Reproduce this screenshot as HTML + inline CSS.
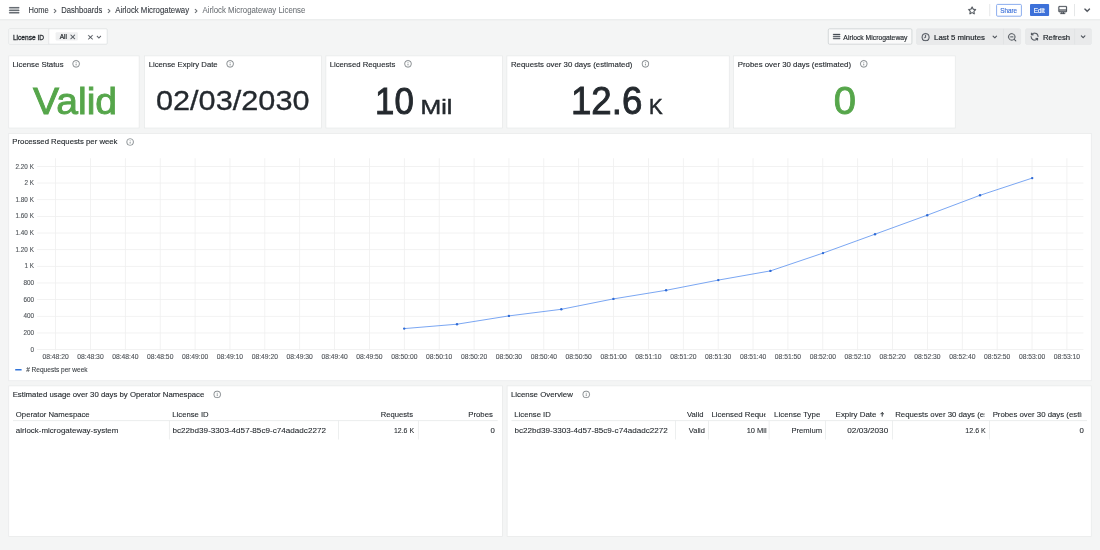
<!DOCTYPE html>
<html><head><meta charset="utf-8"><title>Airlock Microgateway License - Dashboards - Grafana</title>
<style>
html,body{margin:0;padding:0;width:1100px;height:550px;overflow:hidden;background:#f4f5f5;}
svg{position:absolute;left:0;top:0;display:block;will-change:transform;}
text{font-family:"Liberation Sans",sans-serif;white-space:pre;}
</style></head><body>
<svg width="1100" height="550" viewBox="0 0 1100 550">
<rect x="0" y="0" width="1100" height="550" fill="#f4f5f5"/>
<rect x="0" y="0" width="1100" height="19.6" fill="#ffffff"/>
<rect x="0" y="19.3" width="1100" height="1" fill="#e6e8e9"/>
<path transform="translate(8.080 4.300) scale(0.51 0.5)" d="M3,8H21a1,1,0,0,0,0-2H3A1,1,0,0,0,3,8Zm18,8H3a1,1,0,0,0,0,2H21a1,1,0,0,0,0-2Zm0-5H3a1,1,0,0,0,0,2H21a1,1,0,0,0,0-2Z" fill="#464c54" stroke="#464c54" stroke-width="0.5"/>
<path transform="translate(50.300 6.200) scale(0.4 0.4)" d="M14.83,11.29,10.59,7.05a1,1,0,0,0-1.42,0,1,1,0,0,0,0,1.41L12.71,12,9.17,15.54a1,1,0,0,0,0,1.41,1,1,0,0,0,.71.3,1,1,0,0,0,.71-.3l4.24-4.24A1,1,0,0,0,14.83,11.29Z" fill="#5d6267" stroke="#5d6267" stroke-width="0.5"/>
<path transform="translate(104.300 6.200) scale(0.4 0.4)" d="M14.83,11.29,10.59,7.05a1,1,0,0,0-1.42,0,1,1,0,0,0,0,1.41L12.71,12,9.17,15.54a1,1,0,0,0,0,1.41,1,1,0,0,0,.71.3,1,1,0,0,0,.71-.3l4.24-4.24A1,1,0,0,0,14.83,11.29Z" fill="#5d6267" stroke="#5d6267" stroke-width="0.5"/>
<path transform="translate(191.300 6.200) scale(0.4 0.4)" d="M14.83,11.29,10.59,7.05a1,1,0,0,0-1.42,0,1,1,0,0,0,0,1.41L12.71,12,9.17,15.54a1,1,0,0,0,0,1.41,1,1,0,0,0,.71.3,1,1,0,0,0,.71-.3l4.24-4.24A1,1,0,0,0,14.83,11.29Z" fill="#5d6267" stroke="#5d6267" stroke-width="0.5"/>
<path transform="translate(967.300 5.600) scale(0.4 0.4)" d="M22,9.67A1,1,0,0,0,21.14,9l-5.69-.83L12.9,3a1,1,0,0,0-1.8,0L8.55,8.16,2.86,9a1,1,0,0,0-.81.68,1,1,0,0,0,.25,1l4.13,4-1,5.68A1,1,0,0,0,6.9,21.44L12,18.77l5.1,2.67a.93.93,0,0,0,.46.12,1,1,0,0,0,.59-.19,1,1,0,0,0,.4-1l-1-5.68,4.130-4A1,1,0,0,0,22,9.67Zm-6.15,4a1,1,0,0,0-.29.88l.72,4.2-3.760-2a1.06,1.06,0,0,0-.94,0l-3.76,2,.72-4.2a1,1,0,0,0-.29-.88l-3-3,4.21-.61a1,1,0,0,0,.76-.55L12,5.7l1.88,3.82a1,1,0,0,0,.76.55l4.21.61Z" fill="#464c54" stroke="#464c54" stroke-width="0.5"/>
<rect x="989.4" y="4" width="0.8" height="12.2" fill="#dfe1e3"/>
<rect x="1074" y="4" width="0.8" height="12.2" fill="#dfe1e3"/>
<rect x="996.6" y="4.4" width="24.8" height="11.8" rx="1" fill="#ffffff" stroke="#6f98ea" stroke-width="0.8"/>
<rect x="1030" y="4.1" width="19.1" height="12" rx="1" fill="#3d71d9"/>
<path transform="translate(1057.540 4.600) scale(0.43 0.45)" d="M19,3H5A3,3,0,0,0,2,6v8a3,3,0,0,0,3,3H9v2H7a1,1,0,0,0,0,2H17a1,1,0,0,0,0-2H15V17h4a3,3,0,0,0,3-3V6A3,3,0,0,0,19,3ZM13,19H11V17h2Zm7-5a1,1,0,0,1-1,1H5a1,1,0,0,1-1-1V13H20Zm0-3H4V6A1,1,0,0,1,5,5H19a1,1,0,0,1,1,1Z" fill="#464c54" stroke="#464c54" stroke-width="0.5"/>
<path transform="translate(1080.960 3.960) scale(0.52 0.52)" d="M17,9.17a1,1,0,0,0-1.41,0L12,12.71,8.46,9.17a1,1,0,0,0-1.41,0,1,1,0,0,0,0,1.42l4.24,4.24a1,1,0,0,0,1.42,0L17,10.59A1,1,0,0,0,17,9.17Z" fill="#464c54" stroke="#464c54" stroke-width="0.8"/>
<rect x="8.9" y="28.8" width="98.3" height="15.4" rx="1" fill="#ffffff" stroke="#d9dcde" stroke-width="0.7"/>
<rect x="9.25" y="29.15" width="39.35" height="14.7" fill="#f4f5f5"/>
<rect x="48.5" y="28.8" width="0.7" height="15.4" fill="#d9dcde"/>
<rect x="55.6" y="32.3" width="22.3" height="8.3" rx="1" fill="#eff0f1"/>
<path transform="translate(68.310 32.510) scale(0.37 0.37)" d="M13.41,12l4.3-4.29a1,1,0,1,0-1.42-1.42L12,10.59,7.71,6.29A1,1,0,0,0,6.29,7.71L10.59,12l-4.3,4.29a1,1,0,0,0,0,1.420,1,1,0,0,0,1.42,0L12,13.41l4.29,4.3a1,1,0,0,0,1.42,0,1,1,0,0,0,0-1.42Z" fill="#464c54" stroke="#464c54" stroke-width="0.5"/>
<path transform="translate(86.010 32.810) scale(0.37 0.37)" d="M13.41,12l4.3-4.29a1,1,0,1,0-1.42-1.42L12,10.59,7.71,6.29A1,1,0,0,0,6.29,7.71L10.59,12l-4.3,4.29a1,1,0,0,0,0,1.420,1,1,0,0,0,1.42,0L12,13.41l4.29,4.3a1,1,0,0,0,1.42,0,1,1,0,0,0,0-1.42Z" fill="#464c54" stroke="#464c54" stroke-width="0.5"/>
<path transform="translate(94.100 32.300) scale(0.4 0.4)" d="M17,9.17a1,1,0,0,0-1.41,0L12,12.71,8.46,9.17a1,1,0,0,0-1.41,0,1,1,0,0,0,0,1.42l4.24,4.24a1,1,0,0,0,1.42,0L17,10.59A1,1,0,0,0,17,9.17Z" fill="#464c54" stroke="#464c54" stroke-width="0.5"/>
<rect x="828.3" y="28.8" width="83.6" height="15.4" rx="1.2" fill="#fafafa" stroke="#ccd0d2" stroke-width="0.8"/>
<path transform="translate(832.280 31.560) scale(0.36 0.42)" d="M3,8H21a1,1,0,0,0,0-2H3A1,1,0,0,0,3,8Zm18,8H3a1,1,0,0,0,0,2H21a1,1,0,0,0,0-2Zm0-5H3a1,1,0,0,0,0,2H21a1,1,0,0,0,0-2Z" fill="#464c54" stroke="#464c54" stroke-width="0.9"/>
<rect x="916.6" y="28.8" width="104" height="15.6" rx="1.2" fill="#e9eaeb" stroke="#e1e3e4" stroke-width="0.5"/>
<rect x="1003.3" y="28.8" width="0.6" height="15.6" fill="#dcdee0"/>
<path transform="translate(920.920 32.520) scale(0.39 0.39)" d="M12,2A10,10,0,1,0,22,12,10,10,0,0,0,12,2Zm0,18a8,8,0,1,1,8-8A8,8,0,0,1,12,20ZM12,6a1,1,0,0,0-1,1v4.38L8.9,12.59a1,1,0,0,0,1,1.73l2.6-1.5A1,1,0,0,0,13,12V7A1,1,0,0,0,12,6Z" fill="#464c54" stroke="#464c54" stroke-width="0.5"/>
<path transform="translate(990.000 32.200) scale(0.4 0.4)" d="M17,9.17a1,1,0,0,0-1.41,0L12,12.71,8.46,9.17a1,1,0,0,0-1.41,0,1,1,0,0,0,0,1.42l4.24,4.24a1,1,0,0,0,1.42,0L17,10.59A1,1,0,0,0,17,9.17Z" fill="#464c54" stroke="#464c54" stroke-width="0.5"/>
<path transform="translate(1007.400 32.500) scale(0.4 0.4)" d="M21.71,20.29,18,16.61A9,9,0,1,0,16.61,18l3.68,3.68a1,1,0,0,0,1.42,0A1,1,0,0,0,21.71,20.29ZM11,18a7,7,0,1,1,7-7A7,7,0,0,1,11,18Zm3-8H8a1,1,0,0,0,0,2h6a1,1,0,0,0,0-2Z" fill="#464c54" stroke="#464c54" stroke-width="0.5"/>
<rect x="1025.6" y="28.8" width="65.8" height="15.6" rx="1.2" fill="#e9eaeb" stroke="#e1e3e4" stroke-width="0.5"/>
<rect x="1074.5" y="28.8" width="0.6" height="15.6" fill="#dcdee0"/>
<path transform="translate(1029.870 31.920) scale(0.39 0.39)" d="M19.91,15.51H15.38a1,1,0,0,0,0,2h2.4A8,8,0,0,1,4,12a1,1,0,0,0-2,0,10,10,0,0,0,16.88,7.23V21a1,1,0,0,0,2,0V16.5A1,1,0,0,0,19.910,15.51ZM12,2A10,10,0,0,0,5.12,4.77V3a1,1,0,0,0-2,0V7.5a1,1,0,0,0,1,1h4.5a1,1,0,0,0,0-2H6.22A8,8,0,0,1,20,12a1,1,0,0,0,2,0A10,10,0,0,0,12,2Z" fill="#464c54" stroke="#464c54" stroke-width="0.5"/>
<path transform="translate(1078.060 31.760) scale(0.42 0.42)" d="M17,9.17a1,1,0,0,0-1.41,0L12,12.71,8.46,9.17a1,1,0,0,0-1.41,0,1,1,0,0,0,0,1.42l4.24,4.24a1,1,0,0,0,1.42,0L17,10.59A1,1,0,0,0,17,9.17Z" fill="#464c54" stroke="#464c54" stroke-width="0.5"/>
<rect x="8.80" y="55.90" width="130.30" height="72.10" fill="#ffffff" stroke="#e4e6e7" stroke-width="0.6"/>
<rect x="144.60" y="55.90" width="176.70" height="72.10" fill="#ffffff" stroke="#e4e6e7" stroke-width="0.6"/>
<rect x="325.90" y="55.90" width="176.40" height="72.10" fill="#ffffff" stroke="#e4e6e7" stroke-width="0.6"/>
<rect x="506.90" y="55.90" width="222.30" height="72.10" fill="#ffffff" stroke="#e4e6e7" stroke-width="0.6"/>
<rect x="733.60" y="55.90" width="221.60" height="72.10" fill="#ffffff" stroke="#e4e6e7" stroke-width="0.6"/>
<rect x="8.80" y="133.50" width="1082.40" height="247.30" fill="#ffffff" stroke="#e4e6e7" stroke-width="0.6"/>
<rect x="8.80" y="385.90" width="493.50" height="150.40" fill="#ffffff" stroke="#e4e6e7" stroke-width="0.6"/>
<rect x="507.10" y="385.90" width="584.10" height="150.40" fill="#ffffff" stroke="#e4e6e7" stroke-width="0.6"/>
<path transform="translate(71.780 59.480) scale(0.36 0.36)" d="M12,2A10,10,0,1,0,22,12,10,10,0,0,0,12,2Zm0,18a8,8,0,1,1,8-8A8,8,0,0,1,12,20Zm0-8.5a1,1,0,0,0-1,1v3a1,1,0,0,0,2,0v-3A1,1,0,0,0,12,11.5Zm0-4a1.25,1.25,0,1,0,1.25,1.25A1.25,1.25,0,0,0,12,7.5Z" fill="#7a7f84" stroke="#7a7f84" stroke-width="0.3"/>
<path transform="translate(225.780 59.480) scale(0.36 0.36)" d="M12,2A10,10,0,1,0,22,12,10,10,0,0,0,12,2Zm0,18a8,8,0,1,1,8-8A8,8,0,0,1,12,20Zm0-8.5a1,1,0,0,0-1,1v3a1,1,0,0,0,2,0v-3A1,1,0,0,0,12,11.5Zm0-4a1.25,1.25,0,1,0,1.25,1.25A1.25,1.25,0,0,0,12,7.5Z" fill="#7a7f84" stroke="#7a7f84" stroke-width="0.3"/>
<path transform="translate(403.680 59.480) scale(0.36 0.36)" d="M12,2A10,10,0,1,0,22,12,10,10,0,0,0,12,2Zm0,18a8,8,0,1,1,8-8A8,8,0,0,1,12,20Zm0-8.5a1,1,0,0,0-1,1v3a1,1,0,0,0,2,0v-3A1,1,0,0,0,12,11.5Zm0-4a1.25,1.25,0,1,0,1.25,1.25A1.25,1.25,0,0,0,12,7.5Z" fill="#7a7f84" stroke="#7a7f84" stroke-width="0.3"/>
<path transform="translate(641.080 59.480) scale(0.36 0.36)" d="M12,2A10,10,0,1,0,22,12,10,10,0,0,0,12,2Zm0,18a8,8,0,1,1,8-8A8,8,0,0,1,12,20Zm0-8.5a1,1,0,0,0-1,1v3a1,1,0,0,0,2,0v-3A1,1,0,0,0,12,11.5Zm0-4a1.25,1.25,0,1,0,1.25,1.25A1.25,1.25,0,0,0,12,7.5Z" fill="#7a7f84" stroke="#7a7f84" stroke-width="0.3"/>
<path transform="translate(859.480 59.480) scale(0.36 0.36)" d="M12,2A10,10,0,1,0,22,12,10,10,0,0,0,12,2Zm0,18a8,8,0,1,1,8-8A8,8,0,0,1,12,20Zm0-8.5a1,1,0,0,0-1,1v3a1,1,0,0,0,2,0v-3A1,1,0,0,0,12,11.5Zm0-4a1.25,1.25,0,1,0,1.25,1.25A1.25,1.25,0,0,0,12,7.5Z" fill="#7a7f84" stroke="#7a7f84" stroke-width="0.3"/>
<path transform="translate(125.780 137.680) scale(0.36 0.36)" d="M12,2A10,10,0,1,0,22,12,10,10,0,0,0,12,2Zm0,18a8,8,0,1,1,8-8A8,8,0,0,1,12,20Zm0-8.5a1,1,0,0,0-1,1v3a1,1,0,0,0,2,0v-3A1,1,0,0,0,12,11.5Zm0-4a1.25,1.25,0,1,0,1.25,1.25A1.25,1.25,0,0,0,12,7.5Z" fill="#7a7f84" stroke="#7a7f84" stroke-width="0.3"/>
<path transform="translate(212.880 390.080) scale(0.36 0.36)" d="M12,2A10,10,0,1,0,22,12,10,10,0,0,0,12,2Zm0,18a8,8,0,1,1,8-8A8,8,0,0,1,12,20Zm0-8.5a1,1,0,0,0-1,1v3a1,1,0,0,0,2,0v-3A1,1,0,0,0,12,11.5Zm0-4a1.25,1.25,0,1,0,1.25,1.25A1.25,1.25,0,0,0,12,7.5Z" fill="#7a7f84" stroke="#7a7f84" stroke-width="0.3"/>
<path transform="translate(581.880 390.080) scale(0.36 0.36)" d="M12,2A10,10,0,1,0,22,12,10,10,0,0,0,12,2Zm0,18a8,8,0,1,1,8-8A8,8,0,0,1,12,20Zm0-8.5a1,1,0,0,0-1,1v3a1,1,0,0,0,2,0v-3A1,1,0,0,0,12,11.5Zm0-4a1.25,1.25,0,1,0,1.25,1.25A1.25,1.25,0,0,0,12,7.5Z" fill="#7a7f84" stroke="#7a7f84" stroke-width="0.3"/>
<rect x="37.1" y="349.20" width="1046.3" height="0.8" fill="#efefef"/>
<rect x="37.1" y="332.55" width="1046.3" height="0.8" fill="#efefef"/>
<rect x="37.1" y="315.89" width="1046.3" height="0.8" fill="#efefef"/>
<rect x="37.1" y="299.24" width="1046.3" height="0.8" fill="#efefef"/>
<rect x="37.1" y="282.58" width="1046.3" height="0.8" fill="#efefef"/>
<rect x="37.1" y="265.93" width="1046.3" height="0.8" fill="#efefef"/>
<rect x="37.1" y="249.27" width="1046.3" height="0.8" fill="#efefef"/>
<rect x="37.1" y="232.62" width="1046.3" height="0.8" fill="#efefef"/>
<rect x="37.1" y="215.96" width="1046.3" height="0.8" fill="#efefef"/>
<rect x="37.1" y="199.31" width="1046.3" height="0.8" fill="#efefef"/>
<rect x="37.1" y="182.65" width="1046.3" height="0.8" fill="#efefef"/>
<rect x="37.1" y="166.00" width="1046.3" height="0.8" fill="#efefef"/>
<rect x="55.20" y="158.2" width="0.8" height="192.5" fill="#efefef"/>
<rect x="90.07" y="158.2" width="0.8" height="192.5" fill="#efefef"/>
<rect x="124.94" y="158.2" width="0.8" height="192.5" fill="#efefef"/>
<rect x="159.82" y="158.2" width="0.8" height="192.5" fill="#efefef"/>
<rect x="194.69" y="158.2" width="0.8" height="192.5" fill="#efefef"/>
<rect x="229.56" y="158.2" width="0.8" height="192.5" fill="#efefef"/>
<rect x="264.43" y="158.2" width="0.8" height="192.5" fill="#efefef"/>
<rect x="299.31" y="158.2" width="0.8" height="192.5" fill="#efefef"/>
<rect x="334.18" y="158.2" width="0.8" height="192.5" fill="#efefef"/>
<rect x="369.05" y="158.2" width="0.8" height="192.5" fill="#efefef"/>
<rect x="403.92" y="158.2" width="0.8" height="192.5" fill="#efefef"/>
<rect x="438.80" y="158.2" width="0.8" height="192.5" fill="#efefef"/>
<rect x="473.67" y="158.2" width="0.8" height="192.5" fill="#efefef"/>
<rect x="508.54" y="158.2" width="0.8" height="192.5" fill="#efefef"/>
<rect x="543.41" y="158.2" width="0.8" height="192.5" fill="#efefef"/>
<rect x="578.29" y="158.2" width="0.8" height="192.5" fill="#efefef"/>
<rect x="613.16" y="158.2" width="0.8" height="192.5" fill="#efefef"/>
<rect x="648.03" y="158.2" width="0.8" height="192.5" fill="#efefef"/>
<rect x="682.90" y="158.2" width="0.8" height="192.5" fill="#efefef"/>
<rect x="717.78" y="158.2" width="0.8" height="192.5" fill="#efefef"/>
<rect x="752.65" y="158.2" width="0.8" height="192.5" fill="#efefef"/>
<rect x="787.52" y="158.2" width="0.8" height="192.5" fill="#efefef"/>
<rect x="822.39" y="158.2" width="0.8" height="192.5" fill="#efefef"/>
<rect x="857.27" y="158.2" width="0.8" height="192.5" fill="#efefef"/>
<rect x="892.14" y="158.2" width="0.8" height="192.5" fill="#efefef"/>
<rect x="927.01" y="158.2" width="0.8" height="192.5" fill="#efefef"/>
<rect x="961.88" y="158.2" width="0.8" height="192.5" fill="#efefef"/>
<rect x="996.76" y="158.2" width="0.8" height="192.5" fill="#efefef"/>
<rect x="1031.63" y="158.2" width="0.8" height="192.5" fill="#efefef"/>
<rect x="1066.50" y="158.2" width="0.8" height="192.5" fill="#efefef"/>
<polyline points="404.2,328.6 457.0,324.2 508.9,315.9 561.3,309.3 613.4,298.9 666.1,290.3 718.3,280.1 770.4,270.9 823.0,253.1 875.0,234.2 927.2,215.2 980.0,195.3 1032.2,178.1" fill="none" stroke="#6b9cf0" stroke-width="0.9"/>
<circle cx="404.2" cy="328.6" r="1.2" fill="#2f6bd6"/>
<circle cx="457.0" cy="324.2" r="1.2" fill="#2f6bd6"/>
<circle cx="508.9" cy="315.9" r="1.2" fill="#2f6bd6"/>
<circle cx="561.3" cy="309.3" r="1.2" fill="#2f6bd6"/>
<circle cx="613.4" cy="298.9" r="1.2" fill="#2f6bd6"/>
<circle cx="666.1" cy="290.3" r="1.2" fill="#2f6bd6"/>
<circle cx="718.3" cy="280.1" r="1.2" fill="#2f6bd6"/>
<circle cx="770.4" cy="270.9" r="1.2" fill="#2f6bd6"/>
<circle cx="823.0" cy="253.1" r="1.2" fill="#2f6bd6"/>
<circle cx="875.0" cy="234.2" r="1.2" fill="#2f6bd6"/>
<circle cx="927.2" cy="215.2" r="1.2" fill="#2f6bd6"/>
<circle cx="980.0" cy="195.3" r="1.2" fill="#2f6bd6"/>
<circle cx="1032.2" cy="178.1" r="1.2" fill="#2f6bd6"/>
<rect x="15.1" y="369.1" width="6.6" height="1.5" rx="0.6" fill="#3274d9"/>
<rect x="13" y="420.3" width="484.7" height="0.8" fill="#e6e8e9"/>
<rect x="168.95" y="420.7" width="0.7" height="18.8" fill="#e6e8e9"/>
<rect x="338.25" y="420.7" width="0.7" height="18.8" fill="#e6e8e9"/>
<rect x="417.95" y="420.7" width="0.7" height="18.8" fill="#e6e8e9"/>
<rect x="511.5" y="420.3" width="575.5" height="0.8" fill="#e6e8e9"/>
<rect x="675.05" y="420.7" width="0.7" height="18.8" fill="#e6e8e9"/>
<rect x="708.15" y="420.7" width="0.7" height="18.8" fill="#e6e8e9"/>
<rect x="768.75" y="420.7" width="0.7" height="18.8" fill="#e6e8e9"/>
<rect x="825.15" y="420.7" width="0.7" height="18.8" fill="#e6e8e9"/>
<rect x="892.05" y="420.7" width="0.7" height="18.8" fill="#e6e8e9"/>
<rect x="989.25" y="420.7" width="0.7" height="18.8" fill="#e6e8e9"/>
<path d="M882.2 416.6 V412.6 M880.5 414.2 L882.2 412.5 L883.9 414.2" fill="none" stroke="#24292e" stroke-width="1.0"/>
<defs><clipPath id="c1"><rect x="709" y="400" width="56.5" height="30"/></clipPath><clipPath id="c2"><rect x="893" y="400" width="91.5" height="30"/></clipPath><clipPath id="c3"><rect x="990.5" y="400" width="91" height="30"/></clipPath></defs>
<text transform="translate(28.55 12.75) scale(0.896 1)" font-size="8.40" fill="#353a40" stroke="#353a40" stroke-width="0.1">Home</text>
<text transform="translate(61.14 12.75) scale(0.908 1)" font-size="8.40" fill="#353a40" stroke="#353a40" stroke-width="0.1">Dashboards</text>
<text transform="translate(115.25 12.75) scale(0.931 1)" font-size="8.40" fill="#353a40" stroke="#353a40" stroke-width="0.1">Airlock Microgateway</text>
<text transform="translate(202.45 12.75) scale(0.930 1)" font-size="8.40" fill="#6a6f74" stroke="#6a6f74" stroke-width="0.05">Airlock Microgateway License</text>
<text transform="translate(1000.20 13.00) scale(1.004 1)" font-size="6.30" fill="#3d71d9" stroke="#3d71d9" stroke-width="0.15">Share</text>
<text transform="translate(1033.63 13.00) scale(1.022 1)" font-size="6.30" fill="#ffffff" stroke="#ffffff" stroke-width="0.15">Edit</text>
<text transform="translate(12.92 39.50) scale(0.986 1)" font-size="6.70" fill="#24292e" stroke="#24292e" stroke-width="0.28">License ID</text>
<text transform="translate(59.75 39.40) scale(0.967 1)" font-size="6.70" fill="#24292e" stroke="#24292e" stroke-width="0.22">All</text>
<text transform="translate(843.35 39.60) scale(1.030 1)" font-size="6.60" fill="#24292e" stroke="#24292e" stroke-width="0.15">Airlock Microgateway</text>
<text transform="translate(934.12 39.80) scale(1.040 1)" font-size="7.53" fill="#24292e" stroke="#24292e" stroke-width="0.2">Last 5 minutes</text>
<text transform="translate(1043.03 39.80) scale(1.029 1)" font-size="7.53" fill="#24292e" stroke="#24292e" stroke-width="0.2">Refresh</text>
<text transform="translate(12.42 67.00) scale(0.971 1)" font-size="8.05" fill="#24292e" stroke="#24292e" stroke-width="0.12">License Status</text>
<text transform="translate(148.63 67.00) scale(0.965 1)" font-size="8.05" fill="#24292e" stroke="#24292e" stroke-width="0.12">License Expiry Date</text>
<text transform="translate(329.63 67.00) scale(0.962 1)" font-size="8.05" fill="#24292e" stroke="#24292e" stroke-width="0.12">Licensed Requests</text>
<text transform="translate(510.92 67.00) scale(0.974 1)" font-size="8.05" fill="#24292e" stroke="#24292e" stroke-width="0.12">Requests over 30 days (estimated)</text>
<text transform="translate(737.72 67.00) scale(0.976 1)" font-size="8.05" fill="#24292e" stroke="#24292e" stroke-width="0.12">Probes over 30 days (estimated)</text>
<text transform="translate(33.10 114.00) scale(1.085 1)" font-size="36.03" fill="#56a64b" stroke="#56a64b" stroke-width="0.9">Valid</text>
<text transform="translate(155.93 110.10) scale(1.132 1)" font-size="27.12" fill="#24292e" stroke="#24292e" stroke-width="0.3">02/03/2030</text>
<text transform="translate(375.06 113.60) scale(0.933 1)" font-size="37.29" fill="#24292e" stroke="#24292e" stroke-width="0.9">10</text>
<text transform="translate(420.51 113.60) scale(1.178 1)" font-size="21.10" fill="#24292e" stroke="#24292e" stroke-width="0.5">Mil</text>
<text transform="translate(570.93 113.90) scale(0.951 1)" font-size="38.57" fill="#24292e" stroke="#24292e" stroke-width="0.9">12.6</text>
<text transform="translate(649.06 113.90) scale(0.938 1)" font-size="21.88" fill="#24292e" stroke="#24292e" stroke-width="0.5">K</text>
<text transform="translate(833.70 113.90) scale(1.037 1)" font-size="38.57" fill="#56a64b" stroke="#56a64b" stroke-width="0.9">0</text>
<text transform="translate(12.33 144.15) scale(0.989 1)" font-size="7.85" fill="#24292e" stroke="#24292e" stroke-width="0.12">Processed Requests per week</text>
<text transform="translate(30.56 351.70) scale(0.960 1)" font-size="6.60" fill="#50555a" stroke="#50555a" stroke-width="0.12">0</text>
<text transform="translate(23.51 335.05) scale(0.960 1)" font-size="6.60" fill="#50555a" stroke="#50555a" stroke-width="0.12">200</text>
<text transform="translate(23.51 318.39) scale(0.960 1)" font-size="6.60" fill="#50555a" stroke="#50555a" stroke-width="0.12">400</text>
<text transform="translate(23.51 301.74) scale(0.960 1)" font-size="6.60" fill="#50555a" stroke="#50555a" stroke-width="0.12">600</text>
<text transform="translate(23.51 285.08) scale(0.960 1)" font-size="6.60" fill="#50555a" stroke="#50555a" stroke-width="0.12">800</text>
<text transform="translate(24.38 268.43) scale(0.960 1)" font-size="6.60" fill="#50555a" stroke="#50555a" stroke-width="0.12">1 K</text>
<text transform="translate(15.58 251.77) scale(0.960 1)" font-size="6.60" fill="#50555a" stroke="#50555a" stroke-width="0.12">1.20 K</text>
<text transform="translate(15.58 235.12) scale(0.960 1)" font-size="6.60" fill="#50555a" stroke="#50555a" stroke-width="0.12">1.40 K</text>
<text transform="translate(15.58 218.46) scale(0.960 1)" font-size="6.60" fill="#50555a" stroke="#50555a" stroke-width="0.12">1.60 K</text>
<text transform="translate(15.58 201.81) scale(0.960 1)" font-size="6.60" fill="#50555a" stroke="#50555a" stroke-width="0.12">1.80 K</text>
<text transform="translate(24.38 185.15) scale(0.960 1)" font-size="6.60" fill="#50555a" stroke="#50555a" stroke-width="0.12">2 K</text>
<text transform="translate(15.58 168.50) scale(0.960 1)" font-size="6.60" fill="#50555a" stroke="#50555a" stroke-width="0.12">2.20 K</text>
<text transform="translate(42.46 359.30) scale(0.980 1)" font-size="6.90" fill="#50555a" stroke="#50555a" stroke-width="0.12">08:48:20</text>
<text transform="translate(77.33 359.30) scale(0.980 1)" font-size="6.90" fill="#50555a" stroke="#50555a" stroke-width="0.12">08:48:30</text>
<text transform="translate(112.20 359.30) scale(0.980 1)" font-size="6.90" fill="#50555a" stroke="#50555a" stroke-width="0.12">08:48:40</text>
<text transform="translate(147.08 359.30) scale(0.980 1)" font-size="6.90" fill="#50555a" stroke="#50555a" stroke-width="0.12">08:48:50</text>
<text transform="translate(181.95 359.30) scale(0.980 1)" font-size="6.90" fill="#50555a" stroke="#50555a" stroke-width="0.12">08:49:00</text>
<text transform="translate(216.82 359.30) scale(0.980 1)" font-size="6.90" fill="#50555a" stroke="#50555a" stroke-width="0.12">08:49:10</text>
<text transform="translate(251.69 359.30) scale(0.980 1)" font-size="6.90" fill="#50555a" stroke="#50555a" stroke-width="0.12">08:49:20</text>
<text transform="translate(286.57 359.30) scale(0.980 1)" font-size="6.90" fill="#50555a" stroke="#50555a" stroke-width="0.12">08:49:30</text>
<text transform="translate(321.44 359.30) scale(0.980 1)" font-size="6.90" fill="#50555a" stroke="#50555a" stroke-width="0.12">08:49:40</text>
<text transform="translate(356.31 359.30) scale(0.980 1)" font-size="6.90" fill="#50555a" stroke="#50555a" stroke-width="0.12">08:49:50</text>
<text transform="translate(391.18 359.30) scale(0.980 1)" font-size="6.90" fill="#50555a" stroke="#50555a" stroke-width="0.12">08:50:00</text>
<text transform="translate(426.06 359.30) scale(0.980 1)" font-size="6.90" fill="#50555a" stroke="#50555a" stroke-width="0.12">08:50:10</text>
<text transform="translate(460.93 359.30) scale(0.980 1)" font-size="6.90" fill="#50555a" stroke="#50555a" stroke-width="0.12">08:50:20</text>
<text transform="translate(495.80 359.30) scale(0.980 1)" font-size="6.90" fill="#50555a" stroke="#50555a" stroke-width="0.12">08:50:30</text>
<text transform="translate(530.67 359.30) scale(0.980 1)" font-size="6.90" fill="#50555a" stroke="#50555a" stroke-width="0.12">08:50:40</text>
<text transform="translate(565.55 359.30) scale(0.980 1)" font-size="6.90" fill="#50555a" stroke="#50555a" stroke-width="0.12">08:50:50</text>
<text transform="translate(600.42 359.30) scale(0.980 1)" font-size="6.90" fill="#50555a" stroke="#50555a" stroke-width="0.12">08:51:00</text>
<text transform="translate(635.29 359.30) scale(0.980 1)" font-size="6.90" fill="#50555a" stroke="#50555a" stroke-width="0.12">08:51:10</text>
<text transform="translate(670.16 359.30) scale(0.980 1)" font-size="6.90" fill="#50555a" stroke="#50555a" stroke-width="0.12">08:51:20</text>
<text transform="translate(705.04 359.30) scale(0.980 1)" font-size="6.90" fill="#50555a" stroke="#50555a" stroke-width="0.12">08:51:30</text>
<text transform="translate(739.91 359.30) scale(0.980 1)" font-size="6.90" fill="#50555a" stroke="#50555a" stroke-width="0.12">08:51:40</text>
<text transform="translate(774.78 359.30) scale(0.980 1)" font-size="6.90" fill="#50555a" stroke="#50555a" stroke-width="0.12">08:51:50</text>
<text transform="translate(809.65 359.30) scale(0.980 1)" font-size="6.90" fill="#50555a" stroke="#50555a" stroke-width="0.12">08:52:00</text>
<text transform="translate(844.53 359.30) scale(0.980 1)" font-size="6.90" fill="#50555a" stroke="#50555a" stroke-width="0.12">08:52:10</text>
<text transform="translate(879.40 359.30) scale(0.980 1)" font-size="6.90" fill="#50555a" stroke="#50555a" stroke-width="0.12">08:52:20</text>
<text transform="translate(914.27 359.30) scale(0.980 1)" font-size="6.90" fill="#50555a" stroke="#50555a" stroke-width="0.12">08:52:30</text>
<text transform="translate(949.14 359.30) scale(0.980 1)" font-size="6.90" fill="#50555a" stroke="#50555a" stroke-width="0.12">08:52:40</text>
<text transform="translate(984.02 359.30) scale(0.980 1)" font-size="6.90" fill="#50555a" stroke="#50555a" stroke-width="0.12">08:52:50</text>
<text transform="translate(1018.89 359.30) scale(0.980 1)" font-size="6.90" fill="#50555a" stroke="#50555a" stroke-width="0.12">08:53:00</text>
<text transform="translate(1053.76 359.30) scale(0.980 1)" font-size="6.90" fill="#50555a" stroke="#50555a" stroke-width="0.12">08:53:10</text>
<text transform="translate(26.15 372.00) scale(0.949 1)" font-size="6.90" fill="#3d4247" stroke="#3d4247" stroke-width="0.1"># Requests per week</text>
<text transform="translate(12.63 396.90) scale(0.993 1)" font-size="7.85" fill="#24292e" stroke="#24292e" stroke-width="0.12">Estimated usage over 30 days by Operator Namespace</text>
<text transform="translate(510.92 396.90) scale(1.002 1)" font-size="7.85" fill="#24292e" stroke="#24292e" stroke-width="0.12">License Overview</text>
<text transform="translate(15.84 416.80) scale(0.992 1)" font-size="7.80" fill="#24292e" stroke="#24292e" stroke-width="0.1">Operator Namespace</text>
<text transform="translate(172.33 416.80) scale(0.986 1)" font-size="7.80" fill="#24292e" stroke="#24292e" stroke-width="0.1">License ID</text>
<text transform="translate(380.84 416.80) scale(0.978 1)" font-size="7.80" fill="#24292e" stroke="#24292e" stroke-width="0.1">Requests</text>
<text transform="translate(468.22 416.80) scale(1.002 1)" font-size="7.80" fill="#24292e" stroke="#24292e" stroke-width="0.1">Probes</text>
<text transform="translate(15.83 433.40) scale(1.021 1)" font-size="7.80" fill="#24292e" stroke="#24292e" stroke-width="0.08">airlock-microgateway-system</text>
<text transform="translate(172.46 433.40) scale(1.043 1)" font-size="7.80" fill="#24292e" stroke="#24292e" stroke-width="0.08">bc22bd39-3303-4d57-85c9-c74adadc2272</text>
<text transform="translate(393.96 433.40) scale(0.893 1)" font-size="7.80" fill="#24292e" stroke="#24292e" stroke-width="0.08">12.6 K</text>
<text transform="translate(490.54 433.40) scale(1.000 1)" font-size="7.80" fill="#24292e" stroke="#24292e" stroke-width="0.08">0</text>
<text transform="translate(514.33 416.80) scale(0.992 1)" font-size="7.80" fill="#24292e" stroke="#24292e" stroke-width="0.1">License ID</text>
<text transform="translate(686.95 416.80) scale(0.986 1)" font-size="7.80" fill="#24292e" stroke="#24292e" stroke-width="0.1">Valid</text>
<g clip-path="url(#c1)"><text transform="translate(711.43 416.80) scale(1.000 1)" font-size="7.80" fill="#24292e" stroke="#24292e" stroke-width="0.1">Licensed Requests</text></g>
<text transform="translate(774.12 416.80) scale(1.008 1)" font-size="7.80" fill="#24292e" stroke="#24292e" stroke-width="0.1">License Type</text>
<text transform="translate(835.62 416.80) scale(1.015 1)" font-size="7.80" fill="#24292e" stroke="#24292e" stroke-width="0.1">Expiry Date</text>
<g clip-path="url(#c2)"><text transform="translate(895.23 416.80) scale(1.000 1)" font-size="7.80" fill="#24292e" stroke="#24292e" stroke-width="0.1">Requests over 30 days (estimated)</text></g>
<g clip-path="url(#c3)"><text transform="translate(992.63 416.80) scale(1.000 1)" font-size="7.80" fill="#24292e" stroke="#24292e" stroke-width="0.1">Probes over 30 days (estimated)</text></g>
<text transform="translate(514.46 433.40) scale(1.041 1)" font-size="7.80" fill="#24292e" stroke="#24292e" stroke-width="0.08">bc22bd39-3303-4d57-85c9-c74adadc2272</text>
<text transform="translate(688.85 433.40) scale(0.955 1)" font-size="7.80" fill="#24292e" stroke="#24292e" stroke-width="0.08">Valid</text>
<text transform="translate(746.63 433.40) scale(0.961 1)" font-size="7.80" fill="#24292e" stroke="#24292e" stroke-width="0.08">10 Mil</text>
<text transform="translate(791.44 433.40) scale(0.980 1)" font-size="7.80" fill="#24292e" stroke="#24292e" stroke-width="0.08">Premium</text>
<text transform="translate(847.30 433.40) scale(1.049 1)" font-size="7.80" fill="#24292e" stroke="#24292e" stroke-width="0.08">02/03/2030</text>
<text transform="translate(965.35 433.40) scale(0.907 1)" font-size="7.80" fill="#24292e" stroke="#24292e" stroke-width="0.08">12.6 K</text>
<text transform="translate(1079.54 433.40) scale(1.000 1)" font-size="7.80" fill="#24292e" stroke="#24292e" stroke-width="0.08">0</text>
</svg>
</body></html>
